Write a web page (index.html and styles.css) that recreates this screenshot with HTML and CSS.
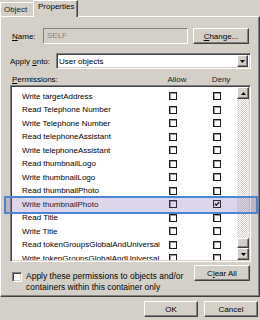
FILE: index.html
```html
<!DOCTYPE html>
<html lang="en">
<head>
    <meta charset="UTF-8">
    <title>Permission Entry</title>
    <link rel="stylesheet" href="styles.css">
</head>
<body>
    <div class="dialog">
        <div class="tabs">
            <div class="tab">Object</div>
            <div class="tab active">Properties</div>
        </div>

        <div class="panel">
            <div class="name-row">
                <span class="lbl name-lbl"><u>N</u>ame:</span>
                <div class="textbox disabled">SELF</div>
                <button class="btn change-btn"><u>C</u>hange...</button>
            </div>

            <div class="onto-row">
                <span class="lbl onto-lbl">Apply <u>o</u>nto:</span>
                <div class="combo">
                    <span class="combo-text">User objects</span>
                    <span class="combo-btn">
                        <svg width="5" height="3" viewBox="0 0 5 3"><polygon points="0,0 5,0 2.5,3" fill="#000"/></svg>
                    </span>
                </div>
            </div>

            <div class="perm-head">
                <span><u>P</u>ermissions:</span>
                <span class="col-head">Allow</span>
                <span class="col-head">Deny</span>
            </div>

            <div class="listbox">
                <div class="rows">
                    <div class="row"><span class="perm">Write targetAddress</span><span class="cb"></span><span class="cb"></span></div>
                    <div class="row"><span class="perm">Read Telephone Number</span><span class="cb"></span><span class="cb"></span></div>
                    <div class="row"><span class="perm">Write Telephone Number</span><span class="cb"></span><span class="cb"></span></div>
                    <div class="row"><span class="perm">Read telephoneAssistant</span><span class="cb"></span><span class="cb"></span></div>
                    <div class="row"><span class="perm">Write telephoneAssistant</span><span class="cb"></span><span class="cb"></span></div>
                    <div class="row"><span class="perm">Read thumbnailLogo</span><span class="cb"></span><span class="cb"></span></div>
                    <div class="row"><span class="perm">Write thumbnailLogo</span><span class="cb"></span><span class="cb"></span></div>
                    <div class="row"><span class="perm">Read thumbnailPhoto</span><span class="cb"></span><span class="cb"></span></div>
                    <div class="row"><span class="perm">Write thumbnailPhoto</span><span class="cb"></span><span class="cb checked"><svg width="6" height="6" viewBox="0 0 6 6"><polyline points="0.8,2.6 2.3,4.2 5.3,0.9" fill="none" stroke="#000" stroke-width="1.3"/></svg></span></div>
                    <div class="row"><span class="perm">Read Title</span><span class="cb"></span><span class="cb"></span></div>
                    <div class="row"><span class="perm">Write Title</span><span class="cb"></span><span class="cb"></span></div>
                    <div class="row"><span class="perm">Read tokenGroupsGlobalAndUniversal</span><span class="cb"></span><span class="cb"></span></div>
                    <div class="row"><span class="perm">Write tokenGroupsGlobalAndUniversal</span><span class="cb"></span><span class="cb"></span></div>
                </div>
                <div class="scrollbar">
                    <div class="sb-btn">
                        <svg width="5" height="3" viewBox="0 0 5 3"><polygon points="2.5,0 5,3 0,3" fill="#000"/></svg>
                    </div>
                    <div class="sb-track"><div class="sb-thumb"></div></div>
                    <div class="sb-btn">
                        <svg width="5" height="3" viewBox="0 0 5 3"><polygon points="0,0 5,0 2.5,3" fill="#000"/></svg>
                    </div>
                </div>
            </div>

            <div class="bottom-row">
                <span class="apply-cb"></span>
                <span class="apply-text">Apply these permissions to objects and/or<br>containers within this container only</span>
                <button class="btn clear-btn">C<u>l</u>ear All</button>
            </div>
        </div>

        <div class="footer">
            <button class="btn foot-btn">OK</button>
            <button class="btn foot-btn">Cancel</button>
        </div>

        <!-- annotation frame drawn over the selected row -->
        <div class="callout"></div>
    </div>
</body>
</html>
```

FILE: styles.css
```css
body {
    margin: 0;
    background-color: #d4d0c8;
    font-family: "Liberation Sans", Arial, sans-serif;
    font-size: 8px;
    color: #000;
}

.dialog {
    position: relative;
    width: 260px;
    height: 320px;
    overflow: hidden;
}

/* tabs */
.tabs {
    display: flex;
    align-items: flex-end;
    height: 16px;
}

.tab {
    box-sizing: border-box;
    width: 33px;
    height: 14px;
    padding-left: 3px;
    line-height: 13px;
    border-top: 1px solid #fff;
    border-left: 1px solid #fff;
    color: #222;
}

.tab.active {
    position: relative;
    width: 45px;
    height: 17px;
    margin-bottom: -1px;
    padding-left: 4px;
    line-height: 12px;
    background-color: #d4d0c8;
    border-right: 1px solid #404040;
    box-shadow: inset -1px 0 #808080;
    color: #000;
}

/* panel */
.panel {
    box-sizing: border-box;
    width: 260px;
    height: 281px;
    padding: 0 8px 0 9px;
    border: 1px solid;
    border-color: #fff #404040 #404040 #fff;
    box-shadow: inset -1px -1px #808080;
}

.name-row {
    display: flex;
    align-items: center;
    height: 16px;
    margin-top: 11px;
    padding-left: 2px;
}

.name-lbl {
    width: 31px;
}

.textbox {
    box-sizing: border-box;
    width: 145px;
    height: 16px;
    padding-left: 3px;
    line-height: 14px;
    border: 1px solid;
    border-color: #808080 #fff #fff #808080;
    box-shadow: inset 1px 1px #404040;
    background-color: #fff;
}

.textbox.disabled {
    background-color: #d4d0c8;
    color: #808080;
    box-shadow: none;
}

.btn {
    box-sizing: border-box;
    height: 16px;
    padding: 0;
    font-family: inherit;
    font-size: 8px;
    color: #000;
    background-color: #d4d0c8;
    border: 1px solid;
    border-color: #fff #404040 #404040 #fff;
    box-shadow: inset -1px -1px #808080;
    text-align: center;
}

.change-btn {
    width: 56px;
    margin-left: 5px;
}

.onto-row {
    display: flex;
    align-items: center;
    height: 16px;
    margin-top: 9px;
}

.onto-lbl {
    width: 46px;
}

.combo {
    box-sizing: border-box;
    display: flex;
    align-items: center;
    width: 195px;
    height: 16px;
    border: 1px solid;
    border-color: #808080 #fff #fff #808080;
    box-shadow: inset 1px 1px #404040, inset -1px -1px #d4d0c8;
    background-color: #fff;
    padding: 2px 2px 2px 2px;
}

.combo-text {
    flex: 1;
}

.combo-btn {
    box-sizing: border-box;
    display: flex;
    align-items: center;
    justify-content: center;
    width: 11px;
    height: 12px;
    background-color: #d4d0c8;
    border: 1px solid;
    border-color: #fff #404040 #404040 #fff;
    box-shadow: inset -1px -1px #808080;
}

/* permissions list */
.perm-head {
    display: grid;
    grid-template-columns: 141px 40px 40px;
    column-gap: 4px;
    align-items: end;
    height: 16px;
    line-height: 10px;
    padding-left: 2px;
}

.col-head {
    text-align: center;
    color: #222;
}

.listbox {
    box-sizing: border-box;
    display: flex;
    width: 241px;
    height: 177px;
    border: 1px solid;
    border-color: #808080 #fff #fff #808080;
    box-shadow: inset 1px 1px #404040, inset -1px -1px #d4d0c8;
    background-color: #fff;
    padding: 1px;
}

.rows {
    flex: 1;
    overflow: hidden;
    padding-top: 2.25px;
}

.row {
    display: grid;
    grid-template-columns: 147px 44px 1fr;
    align-items: center;
    height: 13.5px;
    padding-left: 10px;
}

.perm {
    white-space: nowrap;
    overflow: hidden;
}

.cb {
    box-sizing: border-box;
    display: flex;
    align-items: center;
    justify-content: center;
    width: 8px;
    height: 8px;
    border: 1px solid #1a1a1a;
    box-shadow: inset 1px 1px #9a9a9a;
    background-color: #fff;
}

.cb.checked {
    box-shadow: none;
}

.scrollbar {
    display: flex;
    flex-direction: column;
    width: 12px;
}

.sb-btn {
    box-sizing: border-box;
    display: flex;
    align-items: center;
    justify-content: center;
    height: 12px;
    background-color: #d4d0c8;
    border: 1px solid;
    border-color: #fff #404040 #404040 #fff;
    box-shadow: inset -1px -1px #808080;
}

.sb-track {
    flex: 1;
    display: flex;
    flex-direction: column;
    background: repeating-conic-gradient(#d4d0c8 0 25%, #fff 0 50%) 0 0 / 2px 2px;
}

.sb-thumb {
    box-sizing: border-box;
    height: 10px;
    margin-top: auto;
    background-color: #d4d0c8;
    border: 1px solid;
    border-color: #fff #404040 #404040 #fff;
    box-shadow: inset -1px -1px #808080;
}

/* apply checkbox + clear */
.bottom-row {
    display: flex;
    align-items: flex-start;
    width: 241px;
    margin-top: 3px;
    padding-left: 2px;
    box-sizing: border-box;
}

.apply-cb {
    box-sizing: border-box;
    flex: none;
    width: 10px;
    height: 10px;
    margin-top: 7px;
    border: 1px solid;
    border-color: #808080 #fff #fff #808080;
    box-shadow: inset 1px 1px #404040, inset -1px -1px #d4d0c8;
    background-color: #fff;
}

.apply-text {
    margin-left: 4px;
    margin-top: 6px;
    font-size: 8.5px;
    line-height: 10.5px;
    white-space: nowrap;
}

.clear-btn {
    flex: none;
    width: 56px;
    margin-left: auto;
    margin-right: 1px;
}

/* dialog buttons */
.footer {
    display: flex;
    justify-content: flex-end;
    gap: 6px;
    padding: 4px 2px 0 0;
}

.foot-btn {
    width: 54px;
}

.callout {
    position: absolute;
    left: 4px;
    top: 196px;
    width: 254px;
    height: 18px;
    box-sizing: border-box;
    border: 2px solid #4a84d2;
    background-color: rgba(120, 90, 170, 0.25);
}
```
